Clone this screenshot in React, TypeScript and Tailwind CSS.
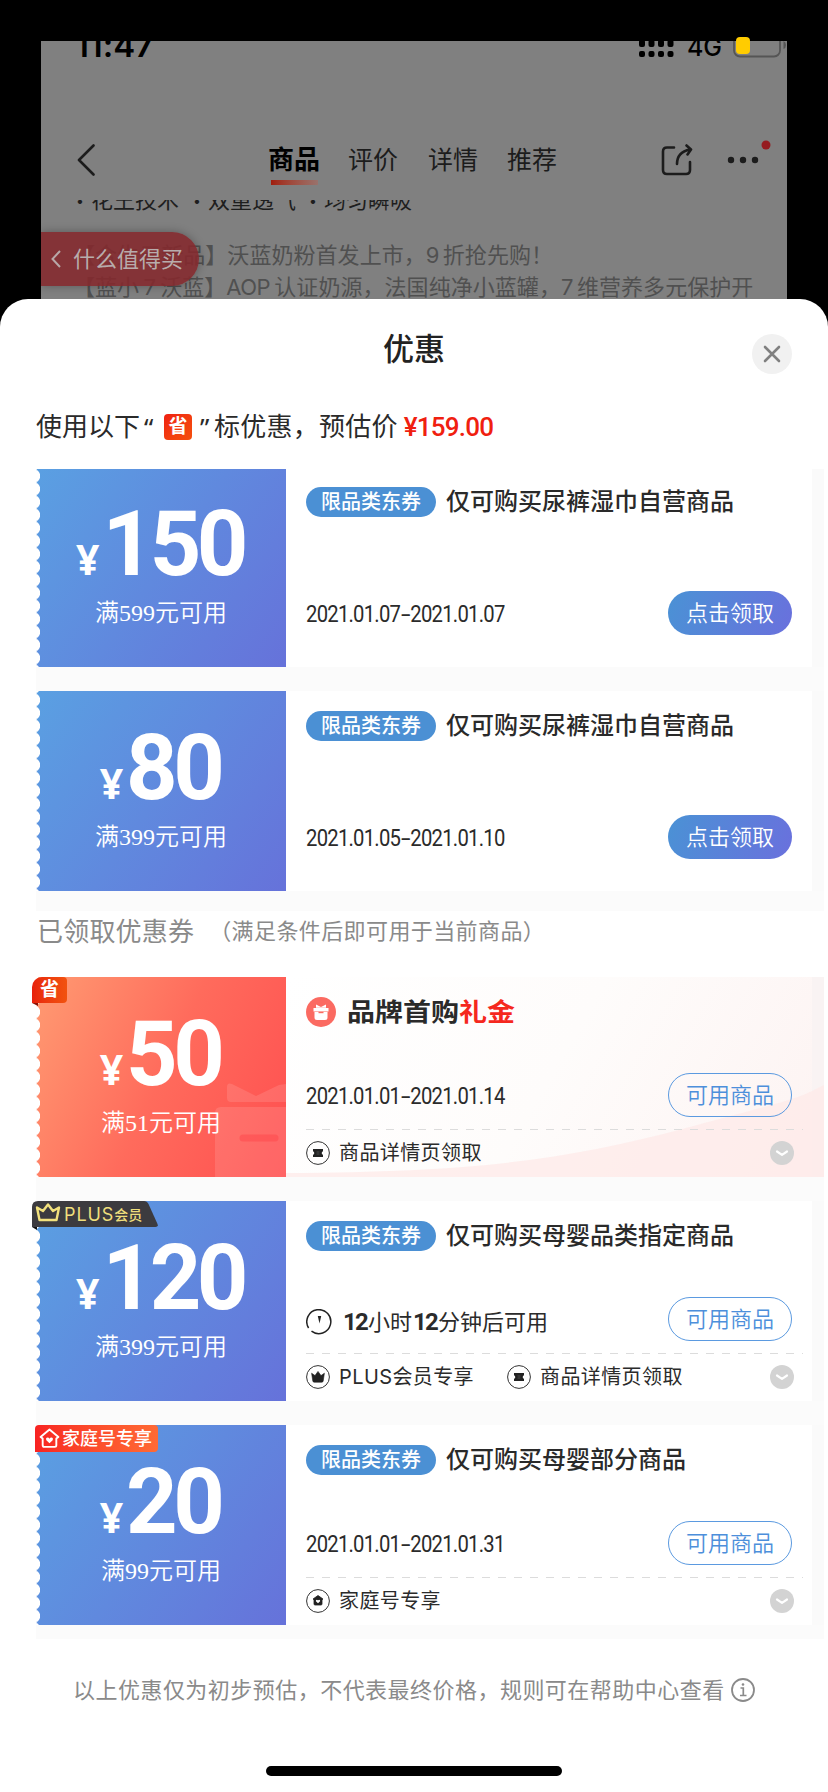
import { type ReactNode } from 'react'
import { clsx } from 'clsx'

type Theme = 'blue' | 'red'

type Coupon = {
  id: number
  amount: string
  limit: string
  title?: string
  date?: [string, string]
  theme: Theme
  claimed: boolean
  badge?: 'save' | 'plus' | 'family'
  perks?: { icon: 'ticket' | 'crown' | 'house'; label: string }[]
}

const AVAILABLE: Coupon[] = [
  { id: 1, amount: '150', limit: '满599元可用', title: '仅可购买尿裤湿巾自营商品', date: ['2021.01.07', '2021.01.07'], theme: 'blue', claimed: false },
  { id: 2, amount: '80', limit: '满399元可用', title: '仅可购买尿裤湿巾自营商品', date: ['2021.01.05', '2021.01.10'], theme: 'blue', claimed: false },
]

const CLAIMED: Coupon[] = [
  {
    id: 3,
    amount: '50',
    limit: '满51元可用',
    date: ['2021.01.01', '2021.01.14'],
    theme: 'red',
    claimed: true,
    badge: 'save',
    perks: [{ icon: 'ticket', label: '商品详情页领取' }],
  },
  {
    id: 4,
    amount: '120',
    limit: '满399元可用',
    title: '仅可购买母婴品类指定商品',
    theme: 'blue',
    claimed: true,
    badge: 'plus',
    perks: [
      { icon: 'crown', label: 'PLUS会员专享' },
      { icon: 'ticket', label: '商品详情页领取' },
    ],
  },
  {
    id: 5,
    amount: '20',
    limit: '满99元可用',
    title: '仅可购买母婴部分商品',
    date: ['2021.01.01', '2021.01.31'],
    theme: 'blue',
    claimed: true,
    badge: 'family',
    perks: [{ icon: 'house', label: '家庭号专享' }],
  },
]

const CROWN = 'M5.6 8.2 9 10.6 12 6.4l3 4.2 3.400-2.400-1.200 7.800q-.2 1.200-1.400 1.200H8.200q-1.200 0-1.400-1.200Z'

const PerkIcon = ({ icon }: { icon: 'ticket' | 'crown' | 'house' }) => (
  <svg viewBox="0 0 24 24" className="size-6 shrink-0" fill="none">
    <circle cx="12" cy="12" r="11.4" stroke="#333" strokeWidth="1" />
    {icon === 'ticket' && (
      <>
        <path d="M7 8h10v2.200a1.900 1.900 0 0 0 0 3.600V16H7v-2.200a1.900 1.900 0 0 0 0-3.600Z" fill="#222" />
        <path d="M10.500 11h3M10.500 13h3" stroke="#777" strokeWidth=".5" />
      </>
    )}
    {icon === 'crown' && <path d={CROWN} fill="#222" stroke="#222" strokeWidth=".6" strokeLinejoin="round" />}
    {icon === 'house' && (
      <>
        <path d="M12 6.500 17 10l-1 .8V15q0 1-1 1H9q-1 0-1-1v-4.200L7 10Z" fill="#222" stroke="#222" strokeWidth=".8" strokeLinejoin="round" />
        <path d="M12 14.300 9.900 12.200q-.4-1.500 1-1.500.7 0 1.100.7.4-.7 1.100-.7 1.400 0 1 1.500Z" fill="#fff" />
      </>
    )}
  </svg>
)

const SaveBadge = () => (
  <div className="absolute -left-1 top-0">
    <div className="flex h-[26px] w-[35px] items-center justify-center rounded-tl-[10px] rounded-r-[4px] bg-linear-to-r from-[#e8200c] to-[#f2520f] text-[19px] font-bold leading-[26px] text-white">
      省
    </div>
    <div className="size-0 border-l-[6px] border-t-[3px] border-l-transparent border-t-[#8d1206]" />
  </div>
)

const PlusBadge = () => (
  <div className="absolute -left-1 top-0">
    <svg viewBox="0 0 126 30" className="absolute left-0 top-0 h-[30px] w-[126px]">
      <path d="M6 0h106q3 0 4.500 3l9 20q1 3-2 3H0V6q0-6 6-6Z" fill="#3c3b3f" />
      <path d="M0 26h5v3Z" fill="#111" />
      <path d="M5 6.500 11 10 16 3.500 21 10l6-3.500-2.500 12.500h-17Z" fill="none" stroke="#f3e27d" strokeWidth="2.400" strokeLinejoin="round" />
    </svg>
    <div className="relative flex h-[26px] items-center pl-8 text-[#efdf7c]">
      <span className="text-[18px] tracking-[0.9px]">PLUS</span>
      <span className="text-[14px] font-medium">会员</span>
    </div>
  </div>
)

const FamilyBadge = () => (
  <div className="absolute -left-px top-0 flex h-[27px] w-[123px] items-center gap-[2px] rounded-tl-[4px] rounded-r-[4px] bg-linear-to-r from-[#f82222] to-[#ff6a35] pl-1">
    <svg viewBox="0 0 20 20" className="size-[21px] shrink-0" fill="none">
      <path d="M10 1.500 18.500 8.500 16.500 10v6.500q0 1.500-1.500 1.500H5q-1.500 0-1.500-1.500V10l-2-1.500Z" stroke="#fff" strokeWidth="1.800" strokeLinejoin="round" />
      <path d="M10 14.500 7 11.600q-.9-2.400 1.200-2.500 1.200 0 1.800 1.200.6-1.200 1.800-1.200 2.100.1 1.200 2.500Z" fill="#fff" />
    </svg>
    <span className="text-[18px] font-medium leading-[27px] text-white">家庭号专享</span>
  </div>
)

const ClaimedFooter = ({ perks }: { perks: Coupon['perks'] }) => (
  <>
    <svg className="mt-3 h-px w-[497px]">
      <line x1="0" x2="497" y1=".5" y2=".5" stroke="#dcdcdc" strokeDasharray="8 8" />
    </svg>
    <div className="mt-[11px] flex h-6 items-center gap-[33px]">
      {perks?.map((perk) => (
        <div key={perk.label} className="flex items-center gap-[9px]">
          <PerkIcon icon={perk.icon} />
          <span className="text-[20px] leading-6 tracking-[0.4px] text-[#2b2b2b]">{perk.label}</span>
        </div>
      ))}
      <svg viewBox="0 0 24 24" className="ml-auto mr-[18px] size-6" fill="none">
        <circle cx="12" cy="12" r="12" fill="#d3d3d3" />
        <path d="m7 10.500 5 3.300 5-3.300" stroke="#fff" strokeWidth="2.200" strokeLinecap="round" strokeLinejoin="round" />
      </svg>
    </div>
  </>
)

const CouponCard = ({ coupon }: { coupon: Coupon }) => {
  const { amount, limit, title, date, theme, claimed, badge, perks } = coupon

  return (
    <div className="relative flex h-[200px] w-[788px] shrink-0">
      <div
        className={clsx(
          'relative flex w-[250px] flex-col items-center text-white',
          theme === 'blue' ? 'bg-linear-[125deg] from-[#5aa0e2] to-[#6672da]' : 'bg-linear-[115deg] from-[#ff9b72] via-[#ff6b5c] to-[#ff4f50]'
        )}
      >
        {theme === 'red' && (
          <svg viewBox="0 0 71 94" className="absolute bottom-0 right-0 h-[94px] w-[71px]">
            <path d="M12 4q0-5 5-3l24 12L64 2l7-1v18H16q-4 0-4-4ZM0 94V30q0-6 6-6h65v70Z" fill="#fff" opacity=".12" />
            <path d="M28 55h32" stroke="#ff4348" strokeWidth="7" strokeLinecap="round" opacity=".45" />
          </svg>
        )}
        <div className="absolute inset-y-0 left-0 w-[6px] bg-[radial-gradient(circle_at_-3px_6.5px,#fff_6.8px,transparent_7.4px)] bg-[length:6px_13px] bg-[position:0_2.500px]" />
        <div className="mt-[40px] flex h-[76px] items-baseline gap-[3px] pr-[2px] font-bold">
          <span className="font-['Noto_Sans',sans-serif] text-[41px] leading-[76px]">¥</span>
          <span className="font-['Roboto',sans-serif] text-[90px] leading-[76px] tracking-[-4.5px]">{amount}</span>
        </div>
        <p className="relative mt-[16px] font-['Liberation_Serif','Noto_Sans_CJK_SC',serif] text-[24px] font-[350] leading-7">{limit}</p>
      </div>

      <div
        className={clsx(
          'relative flex w-[538px] flex-col border-r-[12px] pl-5 pt-5',
          theme === 'red' ? 'border-[#f9f3f3] bg-linear-[120deg] from-white via-[#fefcfb] to-[#fdf3f2]' : 'border-[#fafafa] bg-white'
        )}
      >
        {theme === 'red' && (
          <svg viewBox="0 0 538 200" className="absolute left-0 top-0 h-[200px] w-[538px]">
            <path d="M0 196C190 195 280 183 400 151S510 122 538 108V200H0Z" fill="#fdeae8" opacity=".75" />
          </svg>
        )}
        <div className="relative flex flex-col">
          {title ? (
            <div className="flex h-[30px] items-center gap-[10px]">
              <span className="flex h-[30px] w-[130px] items-center justify-center rounded-full bg-[#4b90d4] text-[20px] font-medium leading-[30px] text-white">
                限品类东券
              </span>
              <h3 className="text-[24px] font-medium leading-[30px] text-[#2a2a2a]">{title}</h3>
            </div>
          ) : (
            <div className="flex h-[30px] items-center gap-[11px]">
              <svg viewBox="0 0 30 30" className="size-[30px]">
                <circle cx="15" cy="15" r="15" fill="#fb6a61" />
                <path d="M10 7.500 15 10l5-2.500v3.300H10ZM7.500 11h15v3.500h-15ZM8.500 15h13v5.500q0 2.500-2.500 2.500h-8q-2.500 0-2.500-2.500Z" fill="#fff" />
                <path d="M12.500 15.500h5" stroke="#fb6a61" strokeWidth="1.400" />
              </svg>
              <h3 className="origin-left scale-y-[0.88] text-[28px] font-bold leading-[30px] text-[#2a2a2a]">
                品牌首购<span className="text-[#f5281e]">礼金</span>
              </h3>
            </div>
          )}

          <div className={clsx('flex h-11 items-center justify-between pr-5', claimed ? 'mt-[46px]' : 'mt-[74px]')}>
            {date ? (
              <span className="w-[200px] origin-left scale-x-[0.88] whitespace-nowrap pt-[3px] font-['Roboto',sans-serif] text-[23px] leading-7 tracking-[-0.85px] text-[#2b2b2b]">
                {date[0]}
                <span className="mx-[3px] inline-block scale-x-[1.7]">-</span>
                {date[1]}
              </span>
            ) : (
              <span className="flex items-center pt-[6px] text-[22px] leading-7 text-[#2b2b2b]">
                <svg viewBox="0 0 26 26" className="mr-[11px] size-[26px]" fill="none">
                  <path d="M5.500 22.200A12 12 0 1 0 2.600 19" stroke="#222" strokeWidth="1.500" />
                  <path d="M11.800 7h3.400l-1.700 7.500Z" fill="#222" />
                </svg>
                <b className="mr-px font-['Roboto',sans-serif] text-[24px] tracking-[-1.8px]">12</b>小时
                <b className="mx-px font-['Roboto',sans-serif] text-[24px] tracking-[-1.8px]">12</b>分钟后可用
              </span>
            )}
            <button
              className={clsx(
                'h-11 w-[124px] rounded-full text-[22px] font-[350] leading-[42px]',
                claimed ? 'border border-[#5b9ae0] text-[#4d8fdb]' : 'bg-linear-[110deg] from-[#4a92d5] to-[#6a70dd] text-white'
              )}
            >
              {claimed ? '可用商品' : '点击领取'}
            </button>
          </div>
          {claimed && <ClaimedFooter perks={perks} />}
        </div>
      </div>

      {badge === 'save' && <SaveBadge />}
      {badge === 'plus' && <PlusBadge />}
      {badge === 'family' && <FamilyBadge />}
    </div>
  )
}

const CouponList = ({ children, className }: { children: ReactNode; className?: string }) => (
  <div className={clsx('ml-9 flex w-[788px] flex-col gap-6 bg-[#fbfbfb]', className)}>{children}</div>
)

// dimmed product page that stays visible behind the sheet
const ProductPage = () => (
  <div className="relative h-[299px] shrink-0 px-[41px] pt-[41px]">
    <div className="flex h-[258px] flex-col overflow-hidden bg-[#808080]">
      <div className="-mt-[10px] flex h-[36px] shrink-0 items-start pl-[34px] text-black">
        <span className="-mt-[2px] font-['Inter',sans-serif] text-[33px] font-semibold leading-[33px] tracking-[-0.1px]">11:47</span>
        <svg viewBox="0 0 35 26" className="ml-auto h-[26px] w-[35px]">
          {[3, 12.500, 22, 31.500].map((x) => (
            <g key={x}>
              <rect x={x - 3} y="9" width="6" height="7" rx="2" />
              <rect x={x - 3} y="20" width="6" height="6" rx="2" />
            </g>
          ))}
        </svg>
        <span className="ml-[13px] font-['Inter',sans-serif] text-[25px] font-medium leading-[33px]">4G</span>
        <svg viewBox="0 0 54 27" className="ml-[11px] h-[27px] w-[54px]" fill="none">
          <rect x="1" y="2" width="46" height="23.500" rx="6" stroke="#555" strokeWidth="1.800" />
          <path d="M50.500 10v8q2.500-1 2.500-4t-2.500-4Z" fill="#555" />
        </svg>
      </div>

      <nav className="mt-[63px] flex h-[60px] shrink-0 items-center pl-9 text-[25px] leading-[60px] text-[#1c1c1c]">
        <svg viewBox="0 0 18 32" className="h-8 w-[18px]" fill="none" stroke="#1c1c1c" strokeWidth="2.600" strokeLinecap="round" strokeLinejoin="round">
          <path d="M16.500 1.500 2 16l14.500 14.500" />
        </svg>
        <span className="relative ml-[173px] text-[26px] font-bold text-black">
          商品
          <i className="absolute left-[3px] top-[50px] h-[5px] w-[47px] bg-linear-to-r from-[#a11c0c] to-[#98726c]" />
        </span>
        <span className="ml-7">评价</span>
        <span className="ml-[30px]">详情</span>
        <span className="ml-[29px]">推荐</span>
        <svg viewBox="0 0 32 32" className="ml-[104px] size-8" fill="none" stroke="#1c1c1c" strokeWidth="2.600" strokeLinecap="round" strokeLinejoin="round">
          <path d="M13 3.500H6q-4 0-4 4V26q0 4 4 4h19q4 0 4-4v-8" />
          <path d="M16 20q0-12 13-14.500M25.500 1.500l4.500 4-3.500 5" />
        </svg>
        <svg viewBox="0 0 46 40" className="ml-[33px] h-10 w-[46px]">
          <circle cx="5" cy="20" r="3.200" fill="#1c1c1c" />
          <circle cx="17" cy="20" r="3.200" fill="#1c1c1c" />
          <circle cx="29" cy="20" r="3.200" fill="#1c1c1c" />
          <circle cx="40" cy="5" r="4.500" fill="#951b20" />
        </svg>
      </nav>

      <div className="mt-[10px] h-[14px] shrink-0 overflow-hidden whitespace-pre pl-[35px] text-[22px] text-[#1e1e1e]">
        <p className="-mt-[15px] flex leading-[30px]">
          <span className="w-[15px] text-[14px] leading-[32px]">•</span>
          <span className="w-[102px]">花王技术</span>
          <span className="w-[15px] text-[14px] leading-[32px]">•</span>
          <span className="w-[101px]">双重透气</span>
          <span className="w-[15px] text-[14px] leading-[32px]">•</span>
          <span>均匀瞬吸</span>
        </p>
      </div>
      <div className="mt-[26px] shrink-0 whitespace-nowrap pl-8 text-[22px] leading-[31.5px] tracking-[0.05px] text-[#505050]">
        <p>
          【合生元新品】沃蓝奶粉首发上市，<span className="inline-block w-[17px]">9</span>折抢先购！
        </p>
        <p>
          【蓝小<span className="inline-block w-[21px] text-center">7</span>沃蓝】<span className="inline-block w-[48px] tracking-[-0.5px]">AOP</span>
          认证奶源，法国纯净小蓝罐，<span className="inline-block w-4">7</span>维营养多元保护开
        </p>
      </div>
    </div>

    <span className="absolute left-[736px] top-[37px] h-[17px] w-[14px] rounded-[4px] bg-[#ffcc00]" />
    <div className="absolute left-[41px] top-[232px] flex h-[54px] w-[158px] items-center gap-[12px] rounded-r-full bg-[#84282c]/88 pl-[10px] shadow-[0_0_10px_rgba(0,0,0,0.3)]">
      <svg viewBox="0 0 10 18" className="h-[18px] w-[10px]" fill="none" stroke="#b8a8a8" strokeWidth="2">
        <path d="M9 1 1.500 9 9 17" />
      </svg>
      <span className="text-[22px] leading-[54px] text-[#b8acac]">什么值得买</span>
    </div>
  </div>
)

export default function App() {
  return (
    <div className="flex h-[1792px] w-[828px] flex-col overflow-hidden bg-black font-['Inter','Noto_Sans_CJK_SC',sans-serif]">
      <ProductPage />
      <main className="relative flex h-[1493px] flex-col rounded-t-[28px] bg-white">
        <h2 className="mt-[30px] text-center text-[31px] font-medium leading-10 text-[#222]">优惠</h2>
        <button className="absolute right-9 top-[35px] flex size-10 items-center justify-center rounded-full bg-[#f1f1f1]">
          <svg viewBox="0 0 18 18" className="size-[18px]" stroke="#808080" strokeWidth="2.600" strokeLinecap="round">
            <path d="m2 2 14 14M16 2 2 16" />
          </svg>
        </button>

        <p className="mt-[38px] flex h-10 items-center pl-9 text-[26px] leading-10 text-[#2a2a2a]">
          <span>使用以下</span>
          <span className="w-6 pl-1 font-['Noto_Sans',sans-serif]">“</span>
          <span className="flex h-[26px] w-7 items-center justify-center rounded-[4px] bg-linear-to-br from-[#f01e12] to-[#f5500d] text-[19px] font-bold leading-[26px] text-white">省</span>
          <span className="w-[22px] pl-2 font-['Noto_Sans',sans-serif]">”</span>
          <span className="tracking-[0.25px]">标优惠，预估价</span>
          <span className="ml-[6px] font-['Roboto',sans-serif] text-[26px] font-medium tracking-[-0.8px] text-[#f0200f]">¥159.00</span>
        </p>

        {/* the list is scrolled by a couple of pixels, so the first coupon is cut at the top */}
        <div className="mt-[22px] h-[442px] shrink-0 overflow-hidden">
          <CouponList className="-mt-[2px] h-[444px]">
            {AVAILABLE.map((coupon) => (
              <CouponCard key={coupon.id} coupon={coupon} />
            ))}
          </CouponList>
        </div>

        <div className="flex h-[66px] shrink-0 items-center pb-[26px] pl-[37px] text-[#8a8a8a]">
          <span className="text-[26px] tracking-[0.2px]">已领取优惠券</span>
          <span className="ml-[15px] text-[22px] tracking-[0.4px]">（满足条件后即可用于当前商品）</span>
        </div>

        <CouponList className="h-[662px] shrink-0">
          {CLAIMED.map((coupon) => (
            <CouponCard key={coupon.id} coupon={coupon} />
          ))}
        </CouponList>

        <p className="mt-[31px] flex items-center gap-[6px] pl-[73px] text-[22px] leading-10 tracking-[0.47px] text-[#8a8a8a]">
          以上优惠仅为初步预估，不代表最终价格，规则可在帮助中心查看
          <svg viewBox="0 0 24 24" className="size-6" fill="none" stroke="#8a8a8a">
            <circle cx="12" cy="12" r="11" strokeWidth="1.800" />
            <path d="M9.500 10h2.800v7.500M9 17.500h6.500" strokeWidth="1.700" />
            <circle cx="12" cy="6.500" r="1.300" fill="#8a8a8a" stroke="none" />
          </svg>
        </p>
        <div className="mx-auto mb-4 mt-auto h-[10px] w-[296px] shrink-0 rounded-full bg-black" />
      </main>
    </div>
  )
}
